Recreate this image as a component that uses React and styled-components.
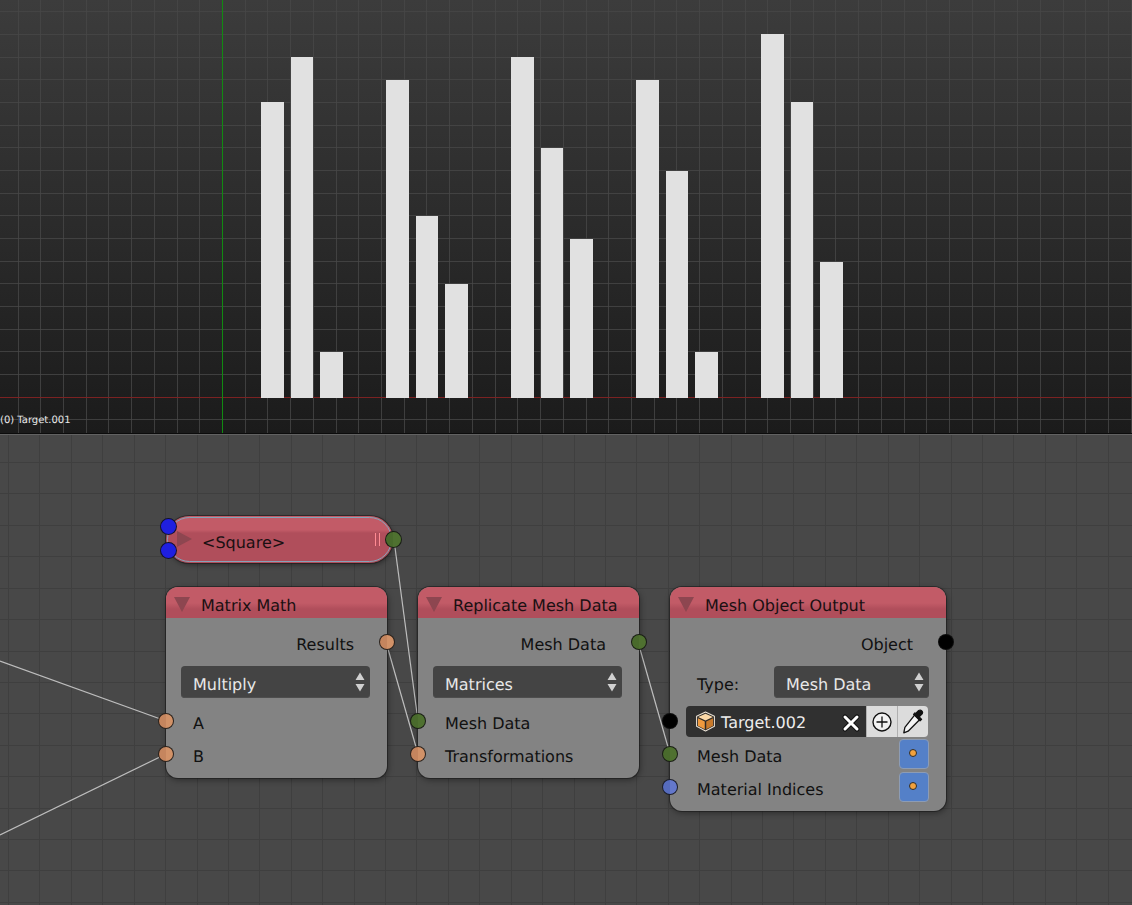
import React from 'react';
import styled, { createGlobalStyle } from 'styled-components';

const Global = createGlobalStyle`
  html, body { margin: 0; padding: 0; background: #484848; overflow: hidden; }
  * { box-sizing: border-box; }
`;

const Page = styled.div`
  width: 1132px; height: 905px; display: flex; flex-direction: column;
  font-family: "DejaVu Sans", sans-serif; overflow: hidden;
  text-rendering: geometricPrecision;
`;
const Viewport = styled.section`
  position: relative; height: 434px; flex: none;
  background: linear-gradient(#3c3c3c, #1b1b1b);
  border-bottom: 1px solid #0c0c0c;
`;
const Drawing = styled.svg`
  display: block; position: absolute; left: 0; top: 0;
`;
const ObjectLabel = styled.div`
  position: absolute; left: 0; bottom: 5px; font-size: 10px; line-height: 14px; color: #e8e8e8;
`;
const NodeEditor = styled.section`
  position: relative; flex: 1;
  background-color: #484848;
  border-top: 1px solid #626262;
`;
const Node = styled.div`
  position: absolute; left: ${p => p.$x}px; top: ${p => p.$y}px; width: ${p => p.$w}px;
  border-radius: 12px; background: #838383; color: #111;
  box-shadow: 0 0 0 1px rgba(20,20,20,.5), 1px 2px 6px rgba(0,0,0,.4);
  font-size: 16px; z-index: 1;
`;
const Header = styled.header`
  height: 31px; display: flex; align-items: center; gap: 11px; padding: 6px 0 0 8px;
  border-radius: 12px 12px 0 0; color: #1a1012;
  background: linear-gradient(#c25b67 0, #c25b67 16px, #b04e5b 22px, #b04e5b 100%);
`;
const Collapse = styled.i`
  width: 0; height: 0; display: block; flex: none; margin-top: -3px;
  border-left: 8px solid transparent; border-right: 8px solid transparent;
  border-top: 15px solid #8d4650;
`;
const Body = styled.div`
  padding: 8px 0; display: flex; flex-direction: column;
`;
const Row = styled.div`
  position: relative; height: ${p => p.$h || 33}px; display: flex; align-items: center;
  justify-content: ${p => (p.$out ? 'flex-end' : 'flex-start')};
  padding: ${p => (p.$out ? 4 : 6)}px ${p => (p.$out ? 33 : 16)}px 0 27px;
  flex: none;
`;
const PickerRow = styled.div`
  position: relative; height: 33px; display: flex; align-items: center; padding: 2px 0 0; flex: none;
`;
const Socket = styled.span`
  position: absolute; width: 16px; height: 16px; border-radius: 50%;
  top: calc(50% - 8px); ${p => (p.$out ? 'right: -8px;' : 'left: -8px;')}
  background: ${p => p.$c}; z-index: 3;
  border: 1px solid rgba(15,15,15,.85);
`;
const Select = styled.div`
  position: relative; height: 32px; border-radius: 4px; background: #444; color: #e8e8e8;
  flex: ${p => (p.$w ? 'none' : 1)}; width: ${p => (p.$w ? `${p.$w}px` : 'auto')};
  display: flex; align-items: center; padding: 4px 12px 0;
  box-shadow: inset 0 -1px 0 #4e4e4e;
`;
const SelectRow = styled.div`
  height: 32px; margin: 8px 17px 6px 15px; display: flex; align-items: center; flex: none;
`;
const TypeLabel = styled.span`
  flex: 1; padding: 4px 0 0 12px;
`;
const Arrows = styled.svg`
  position: absolute; right: 3px; top: 5px; display: block;
`;
const Picker = styled.div`
  height: 31px; margin: 0 18px 0 16px; display: flex; border-radius: 4px; overflow: hidden; flex: 1;
  position: relative;
`;
const PickerName = styled.div`
  flex: 1; background: #303030; color: #ececec; display: flex; align-items: center; gap: 5px;
  padding: 2px 0 0 9px;
`;
const PickerButton = styled.div`
  width: 31px; flex: none; background: #dcdcdc; display: flex; align-items: center; justify-content: center;
  border-left: 1px solid #b0b0b0;
`;
const ClearIcon = styled.svg`
  margin-left: auto; margin-right: 5px; display: block;
`;
const ValueButton = styled.div`
  position: absolute; right: 17px; top: 2px; width: 30px; height: 30px; border-radius: 4px;
  background: #5480c8; border: 1px solid #8d9cb4; display: flex; align-items: center; justify-content: center;
`;
const ValueDot = styled.i`
  display: block; width: 8px; height: 8px; border-radius: 50%; background: #f2a13c; border: 1px solid #2d2d2d; margin: -3px 2px 0 0;
`;
const Reroute = styled.div`
  position: absolute; left: 166px; top: 81px; width: 227px; height: 47px; border-radius: 24px;
  background: linear-gradient(#c25b67 0, #c25b67 14px, #b04e5b 17px, #b04e5b 100%);
  box-shadow: 0 0 0 1px rgba(30,20,20,.55), 1px 2px 5px rgba(0,0,0,.4);
  color: #1a1012; font-size: 16px; z-index: 1;
  display: flex; align-items: center; padding: 5px 0 0 36px;
  &::before {
    content: ""; position: absolute; inset: 1px; border-radius: 23px; border: 1px solid #86a3b8; pointer-events: none;
  }
`;
const RerouteTriangle = styled.i`
  position: absolute; left: 11px; top: 15px; width: 0; height: 0;
  border-top: 8px solid transparent; border-bottom: 8px solid transparent; border-left: 15px solid #8d4650;
`;
const HideMark = styled.i`
  position: absolute; right: 13px; top: 17px; width: 5px; height: 13px;
  border-left: 1px solid #ff8b93; border-right: 1px solid #ff8b93;
`;
const PillSocket = styled.span`
  position: absolute; width: 17px; height: 17px; border-radius: 50%; z-index: 3;
  left: ${p => p.$x}px; top: ${p => p.$y}px; background: ${p => p.$c};
  border: 1px solid rgba(15,15,15,.85);
`;

const XS = [];
for (let x = 222 - 22.72 * 10; x < 1132; x += 22.72) XS.push(Math.round(x) + 0.5);
const YS = [];
for (let k = 0; k < 20; k++) YS.push(Math.round(11.4 + 22.67 * k) + 0.5);
const BARS = [
  [261, 102, 23], [291, 57, 22], [320, 352, 23],
  [386, 80, 23], [416, 216, 22], [445, 284, 23],
  [511, 57, 23], [541, 148, 22], [570, 239, 23],
  [636, 80, 23], [666, 171, 22], [695, 352, 23],
  [761, 34, 23], [791, 102, 22], [820, 262, 23],
];
const NX = [];
for (let x = 8; x < 1132; x += 31.42) NX.push(Math.round(x) + 0.5);
const NY = [];
for (let y = 27; y < 480; y += 31.42) NY.push(Math.round(y) + 0.5);

const WIRES = [
  [0, 226, 166, 286], [0, 400, 166, 319], [394, 105, 418, 286],
  [386, 207, 418, 319], [638, 207, 670, 319],
];

const ORANGE = 'linear-gradient(90deg,#c5855e 50%,#d29268 50%)';
const GREEN = 'linear-gradient(90deg,#496a2c 50%,#4f7130 50%)';
const BLUE = 'linear-gradient(90deg,#566cbe 50%,#6478cc 50%)';

const UpDown = () => (
  <Arrows width="14" height="22" viewBox="0 0 14 22">
    <path d="M7 1.5 L11.5 9 H2.5 Z M7 20.5 L11.5 13 H2.5 Z" fill="#d0d0d0" />
  </Arrows>
);

const Cube = () => (
  <svg width="21" height="21" viewBox="0 0 20 20" style={{ display: 'block', marginTop: -2 }}>
    <path d="M10 1 L18.5 5 V14.5 L10 19 L1.5 14.5 V5 Z" fill="#2e2a26" stroke="#e8e0d4" strokeWidth="1" strokeLinejoin="round" />
    <path d="M10 2.5 L17 5.6 L10 9 L3 5.6 Z" fill="#fbd9a8" />
    <path d="M2.8 6.8 L9.3 10 V17.4 L2.8 14 Z" fill="#f09a3e" />
    <path d="M17.2 6.8 L10.7 10 V17.4 L17.2 14 Z" fill="#c87a2c" />
  </svg>
);

const Cross = () => (
  <ClearIcon width="20" height="20" viewBox="0 0 20 20">
    <path d="M4 4 L16 16 M16 4 L4 16" stroke="#111" strokeWidth="5" strokeLinecap="round" />
    <path d="M4 4 L16 16 M16 4 L4 16" stroke="#fff" strokeWidth="3" strokeLinecap="round" />
  </ClearIcon>
);

const PlusCircle = () => (
  <svg width="22" height="22" viewBox="0 0 22 22" style={{ display: 'block' }}>
    <circle cx="11" cy="11" r="9" fill="#f2f2f2" stroke="#111" strokeWidth="1.4" />
    <path d="M11 5.5 V16.5 M5.5 11 H16.5" stroke="#111" strokeWidth="1.3" />
  </svg>
);

const Dropper = () => (
  <svg width="24" height="26" viewBox="0 0 22 24" style={{ display: 'block' }}>
    <path d="M13 5 L17.5 9.5 L6.5 20.5 L2.5 22 L3.5 17 Z" fill="#f4f4f4" stroke="#111" strokeWidth="1.2" strokeLinejoin="round" />
    <path d="M11.5 5 L17.5 11 L19 9.5 L16.8 7.3 L19.5 4.6 A2.4 2.4 0 0 0 16.2 1.3 L13.5 4 L12.7 3.6 Z" fill="#111" stroke="#111" strokeWidth="1" strokeLinejoin="round" />
  </svg>
);

const OutRow = ({ children, color }) => (
  <Row $out $h={32}>
    {children}
    <Socket $out $c={color} />
  </Row>
);
const InRow = ({ children, color }) => (
  <Row>
    <Socket $c={color} />
    {children}
  </Row>
);

export default function App() {
  return (
    <Page>
      <Global />
      <Viewport>
        <Drawing width="1132" height="433" viewBox="0 0 1132 433">
          {XS.map(x => <path key={x} d={`M${x} 0V433`} stroke="#474747" strokeOpacity=".8" strokeWidth="1" />)}
          {YS.map(y => <path key={y} d={`M0 ${y}H1132`} stroke="#474747" strokeOpacity=".8" strokeWidth="1" />)}
          <path d="M0 397.5H1132" stroke="#7c2222" />
          <path d="M222.5 0V433" stroke="#118a11" />
          {BARS.map(([x, y, w]) => <rect key={x} x={x} y={y} width={w} height={398 - y} fill="#e1e1e1" />)}
        </Drawing>
        <ObjectLabel>(0) Target.001</ObjectLabel>
      </Viewport>
      <NodeEditor>
        <Drawing width="1132" height="470" viewBox="0 0 1132 470">
          {NX.map(x => <path key={x} d={`M${x} 0V470`} stroke="#3f3f3f" />)}
          {NY.map(y => <path key={y} d={`M0 ${y}H1132`} stroke="#3f3f3f" />)}
          {WIRES.map((w, i) => (
            <line key={i} x1={w[0]} y1={w[1]} x2={w[2]} y2={w[3]} stroke="#bdbdbd" strokeWidth="1.2" />
          ))}
        </Drawing>
        <Reroute>
          <PillSocket $x={-6} $y={2} $c="#1f1fe0" />
          <PillSocket $x={-6} $y={26} $c="#1f1fe0" />
          <RerouteTriangle />
          &lt;Square&gt;
          <HideMark />
          <PillSocket $x={219} $y={15} $c={GREEN} />
        </Reroute>

        <Node $x={166} $y={152} $w={221}>
          <Header><Collapse />Matrix Math</Header>
          <Body>
            <OutRow color={ORANGE}>Results</OutRow>
            <SelectRow><Select>Multiply<UpDown /></Select></SelectRow>
            <InRow color={ORANGE}>A</InRow>
            <InRow color={ORANGE}>B</InRow>
          </Body>
        </Node>

        <Node $x={418} $y={152} $w={221}>
          <Header><Collapse />Replicate Mesh Data</Header>
          <Body>
            <OutRow color={GREEN}>Mesh Data</OutRow>
            <SelectRow><Select>Matrices<UpDown /></Select></SelectRow>
            <InRow color={GREEN}>Mesh Data</InRow>
            <InRow color={ORANGE}>Transformations</InRow>
          </Body>
        </Node>

        <Node $x={670} $y={152} $w={276}>
          <Header><Collapse />Mesh Object Output</Header>
          <Body>
            <OutRow color="#000">Object</OutRow>
            <SelectRow>
              <TypeLabel>Type:</TypeLabel>
              <Select $w={155}>Mesh Data<UpDown /></Select>
            </SelectRow>
            <PickerRow>
              <Socket $c="#000" />
              <Picker>
                <PickerName><Cube />Target.002<Cross /></PickerName>
                <PickerButton><PlusCircle /></PickerButton>
                <PickerButton><Dropper /></PickerButton>
              </Picker>
            </PickerRow>
            <InRow color={GREEN}>Mesh Data<ValueButton><ValueDot /></ValueButton></InRow>
            <InRow color={BLUE}>Material Indices<ValueButton><ValueDot /></ValueButton></InRow>
          </Body>
        </Node>
      </NodeEditor>
    </Page>
  );
}
